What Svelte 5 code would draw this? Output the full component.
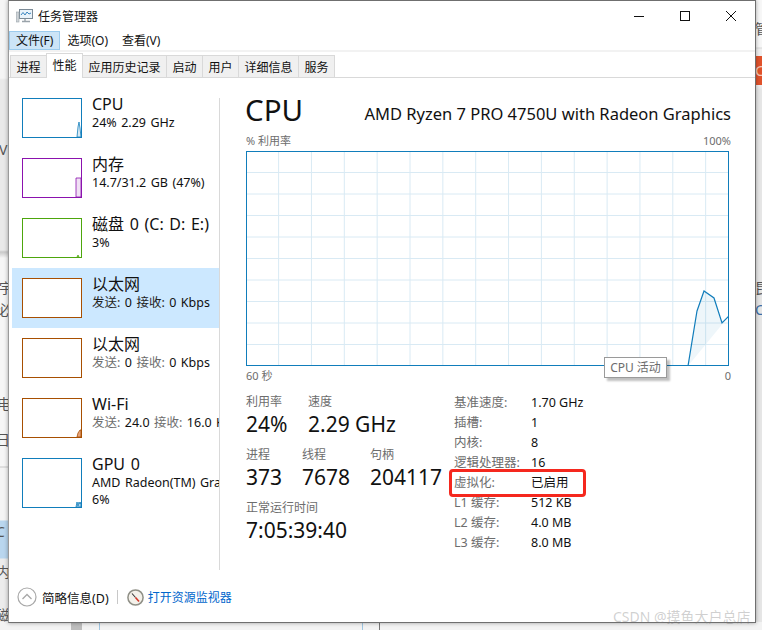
<script>
	const devices = [
		{ title: 'CPU', lines: [{ text: '24% 2.29 GHz' }], color: '#117dbb', fill: '#d9eaf4', points: '55,39 56,29 57,24 58,30 59,39' },
		{ title: '内存', lines: [{ text: '14.7/31.2 GB (47%)' }], color: '#8b12ae', fill: '#f0e0f4', points: '54,39 54,20 59,20 59,39' },
		{ title: '磁盘 0 (C: D: E:)', lines: [{ text: '3%' }], color: '#4da60c', fill: '#cfe8bc', points: '55,39 56,37 57,39' },
		{ title: '以太网', lines: [{ send: '0', recv: '0 Kbps' }], color: '#a74f01', selected: true },
		{ title: '以太网', lines: [{ send: '0', recv: '0 Kbps' }], color: '#a74f01' },
		{ title: 'Wi-Fi', lines: [{ send: '24.0', recv: '16.0 Kbps' }], color: '#a74f01', fill: '#e8a47c', points: '55,39 56,35 58,32 59,32 59,39' },
		{ title: 'GPU 0', lines: [{ text: 'AMD Radeon(TM) Graphics' }, { text: '6%' }], color: '#117dbb', fill: '#a8d0ea', points: '54,49 55,44 56,48 57,44 58,46 59,44 59,49', tall: true }
	];

	const facts = [
		['基准速度:', '1.70 GHz'],
		['插槽:', '1'],
		['内核:', '8'],
		['逻辑处理器:', '16'],
		['虚拟化:', '已启用'],
		['L1 缓存:', '512 KB'],
		['L2 缓存:', '4.0 MB'],
		['L3 缓存:', '8.0 MB']
	];

	const tabs = ['进程', '性能', '应用历史记录', '启动', '用户', '详细信息', '服务'];
	const menus = ['文件(F)', '选项(O)', '查看(V)'];

	const cols = Array.from({ length: 15 }, (_, i) => 164 + (i - 5) * 32.85);
	const rows = Array.from({ length: 9 }, (_, i) => (i + 1) * 21.5);
	const usage = '442,215 451,160 458,140 468,147 476,172 483,165';
</script>

<div class="desktop">
	<div class="backdrop">
		<div class="back-left"></div>
		<div class="back-right"></div>
		<div class="back-bottom"></div>
		<span class="frag" style="left:-1px;top:141px">V</span>
		<span class="frag" style="left:-1px;top:279px">宇</span>
		<span class="frag" style="left:-3px;top:301px">必</span>
		<span class="frag" style="left:-3px;top:395px">电</span>
		<span class="frag" style="left:-4px;top:431px">日</span>
		<span class="frag" style="left:-4px;top:523px">C</span>
		<span class="frag" style="left:-4px;top:563px">内</span>
		<span class="frag" style="left:-4px;top:606px">磁</span>
		<span class="frag" style="left:755px;top:20px">管</span>
		<span class="frag" style="left:755px;top:279px">昆</span>
		<span class="frag blue" style="left:755px;top:301px">C</span>
		<span class="orange">C</span>
	</div>

	<div class="window">
		<header class="titlebar">
			<svg class="app-icon" width="17" height="17" viewBox="0 0 17 17">
				<rect x="3.5" y="2.5" width="13" height="9" fill="#eaf3fa" stroke="#7b8a96" />
				<path d="M5 8 L7 5.5 L9 8 L11 5 L13 7 L15 6" fill="none" stroke="#3a86c0" />
				<rect x="0.5" y="5" width="2.5" height="10" fill="#cfd4d8" stroke="#9aa3aa" stroke-width="0.6" />
				<path d="M6 14.5 H14 M9 12 V14" stroke="#9aa3aa" stroke-width="1.4" />
			</svg>
			<span class="app-title">任务管理器</span>
			<div class="controls">
				<svg width="46" height="29" viewBox="0 0 46 29"><path d="M18 15.5 H28" stroke="#111" /></svg>
				<svg width="46" height="29" viewBox="0 0 46 29"><rect x="18.5" y="10.5" width="9" height="9" fill="none" stroke="#111" /></svg>
				<svg width="46" height="29" viewBox="0 0 46 29"><path d="M18 10 L28 20 M28 10 L18 20" stroke="#111" /></svg>
			</div>
		</header>

		<nav class="menubar">
			{#each menus as menu, i}
				<span class="menu" class:open={i === 0}>{menu}</span>
			{/each}
		</nav>

		<div class="tabs">
			{#each tabs as tab, i}
				<span class="tab" class:active={i === 1}>{tab}</span>
			{/each}
		</div>

		<div class="body">
			<aside class="sidebar">
				{#each devices as d}
					<div class="device" class:selected={d.selected} class:tall={d.tall}>
						<div class="thumb" style="border-color:{d.color}">
							{#if d.points}
								<svg viewBox="0 0 60 {d.tall ? 50 : 40}" width="60" height={d.tall ? 50 : 40} preserveAspectRatio="none">
									<polygon points={d.points} fill={d.fill} stroke={d.color} stroke-width="0.8" />
								</svg>
							{/if}
						</div>
						<div class="device-text">
							<div class="device-title">{d.title}</div>
							{#each d.lines as line}
								{#if line.text}
									<div class="device-line">{line.text}</div>
								{:else}
									<div class="device-line">
										<span class="muted">发送:</span> {line.send} <span class="muted">接收:</span> {line.recv}
									</div>
								{/if}
							{/each}
						</div>
					</div>
				{/each}
			</aside>

			<main class="detail">
				<div class="heading">
					<h1>CPU</h1>
					<span class="model">AMD Ryzen 7 PRO 4750U with Radeon Graphics</span>
				</div>
				<div class="axis-top">
					<span>% 利用率</span>
					<span>100%</span>
				</div>
				<svg class="chart" width="483" height="215" viewBox="0 0 483 215">
					{#each cols as x}
						<line x1={x} x2={x} y1="0" y2="215" stroke="#d9eaf4" />
					{/each}
					{#each rows as y}
						<line x1="0" x2="483" y1={y} y2={y} stroke="#d9eaf4" />
					{/each}
					<polygon points={usage} fill="#117dbb" fill-opacity="0.07" />
					<polyline points={usage} fill="none" stroke="#117dbb" stroke-width="1.2" />
					<rect x="0.5" y="0.5" width="482" height="214" fill="none" stroke="#117dbb" />
				</svg>
				<div class="axis-bottom">
					<span>60 秒</span>
					<span>0</span>
				</div>
				<div class="tooltip">CPU 活动</div>

				<div class="stats">
					<div class="live">
						<div class="stat-row">
							<div class="stat w62"><span class="stat-label">利用率</span><b>24%</b></div>
							<div class="stat"><span class="stat-label">速度</span><b>2.29 GHz</b></div>
						</div>
						<div class="stat-row">
							<div class="stat w56"><span class="stat-label">进程</span><b>373</b></div>
							<div class="stat w68"><span class="stat-label">线程</span><b>7678</b></div>
							<div class="stat"><span class="stat-label">句柄</span><b>204117</b></div>
						</div>
						<div class="stat-row">
							<div class="stat"><span class="stat-label">正常运行时间</span><b>7:05:39:40</b></div>
						</div>
					</div>
					<dl class="facts">
						{#each facts as [name, value]}
							<dt>{name}</dt>
							<dd>{value}</dd>
						{/each}
					</dl>
				</div>
			</main>
		</div>

		<footer class="footer">
			<svg width="20" height="20" viewBox="0 0 20 20">
				<circle cx="10" cy="10" r="9" fill="none" stroke="#a8a8a8" stroke-width="1.2" />
				<path d="M5.5 12 L10 7.5 L14.5 12" fill="none" stroke="#a8a8a8" stroke-width="1.3" />
			</svg>
			<span class="fewer">简略信息(D)</span>
			<span class="sep"></span>
			<svg width="17" height="17" viewBox="0 0 17 17">
				<circle cx="8.5" cy="8.5" r="7.6" fill="#f4f1ea" stroke="#8f8f86" stroke-width="1.5" />
				<path d="M5 4.5 L8.5 8.5" stroke="#333" stroke-width="1.1" />
				<path d="M8.5 8.5 L12 12.5" stroke="#d2392b" stroke-width="1.6" />
			</svg>
			<span class="link">打开资源监视器</span>
		</footer>

		<div class="redbox"></div>
	</div>

	<div class="watermark">CSDN @摸鱼大户总店</div>
</div>

<style>
	:global(body) {
		margin: 0;
		background: #f2f2f2;
	}

	.desktop {
		position: relative;
		width: 762px;
		height: 630px;
		overflow: hidden;
		font-family: "Noto Sans", "Noto Sans CJK SC", sans-serif;
		font-size: 12px;
		color: #111;
	}

	.backdrop {
		position: absolute;
		inset: 0;
		overflow: hidden;
	}

	.back-left {
		position: absolute;
		left: 0;
		top: 0;
		width: 8px;
		height: 630px;
		background: linear-gradient(#f5f5f5 0, #f5f5f5 78px, #e9e9e9 80px, #e9e9e9 250px, #c9c9c9 252px, #f6f6f6 258px, #f6f6f6 466px, #c8c8c8 467px, #f4f4f4 468px, #f4f4f4 520px, #b9d6ee 521px, #b9d6ee 558px, #ececec 559px);
	}

	.back-right {
		position: absolute;
		right: 0;
		top: 0;
		width: 7px;
		height: 630px;
		background: linear-gradient(#f7f7f7 0, #f7f7f7 47px, #d8d8d8 48px, #f0f0f0 49px, #f0f0f0 85px, #e6e6e6 90px);
	}

	.back-bottom {
		position: absolute;
		left: 0;
		right: 0;
		bottom: 0;
		height: 8px;
		background: #f3f3f3;
		background-image: linear-gradient(90deg, transparent 71px, #bdbdbd 71px, #bdbdbd 82px, transparent 82px, transparent 99px, #9fc6e2 99px, #9fc6e2 100px, transparent 100px, transparent 362px, #9fc6e2 362px, #9fc6e2 363px, transparent 363px, transparent 379px, #777 379px, #777 380px, transparent 380px);
	}

	.frag {
		position: absolute;
		font-size: 14px;
		line-height: 18px;
		color: #555;
	}

	.frag.blue {
		color: #3c6fa8;
	}

	.orange {
		position: absolute;
		left: 755px;
		top: 56px;
		width: 7px;
		height: 29px;
		overflow: hidden;
		background: #e0522b;
		color: #f6c9b8;
		font-size: 15px;
		line-height: 29px;
	}

	.window {
		position: absolute;
		left: 8px;
		top: 0;
		width: 746px;
		height: 621px;
		display: flex;
		flex-direction: column;
		background: #fff;
		border: 1px solid #6f6f6f;
		border-left-color: #9a9a9a;
		box-shadow: 0 0 4px rgba(0, 0, 0, 0.35);
	}

	.titlebar {
		flex: 0 0 29px;
		display: flex;
		align-items: center;
		padding-left: 7px;
	}

	.app-title {
		margin-left: 5px;
		font-size: 12px;
	}

	.controls {
		margin-left: auto;
		display: flex;
		margin-right: 1px;
	}

	.menubar {
		flex: 0 0 19px;
		display: flex;
		border-bottom: 2px solid #f2f2f2;
		padding-top: 1px;
	}

	.menu {
		padding: 0 6px;
		line-height: 17px;
		border: 1px solid transparent;
		border-bottom: 0;
	}

	.menu.open {
		background: #cce4f7;
		border: 1px solid #9ccbed;
	}

	.tabs {
		flex: 0 0 26px;
		display: flex;
		align-items: flex-end;
		padding-left: 2px;
		border-bottom: 1px solid #d9d9d9;
		box-sizing: border-box;
	}

	.tab {
		height: 22px;
		line-height: 23px;
		padding: 0 5.5px;
		margin-left: -1px;
		background: #f0f0f0;
		border: 1px solid #d9d9d9;
		border-bottom: 0;
		box-sizing: border-box;
	}

	.tab.active {
		height: 25px;
		line-height: 24px;
		background: #fff;
		margin-bottom: -1px;
		position: relative;
	}

	.body {
		flex: 1;
		display: flex;
		min-height: 0;
	}

	.sidebar {
		flex: 0 0 208px;
		min-width: 0;
		margin-left: 3px;
		padding-top: 10px;
		box-sizing: border-box;
		height: 492px;
		position: relative;
	}

	.sidebar::after {
		content: '';
		position: absolute;
		right: 0;
		top: 20px;
		bottom: 0;
		width: 1px;
		background: #d9d9d9;
	}

	.device {
		height: 60px;
		display: flex;
		box-sizing: border-box;
		padding: 10px 0 0 10px;
		overflow: hidden;
	}

	.device.tall {
		height: 70px;
	}

	.device.selected {
		background: #cce8ff;
	}

	.thumb {
		flex: 0 0 60px;
		height: 40px;
		box-sizing: border-box;
		border: 1px solid;
		overflow: hidden;
		background: #fff;
	}

	.tall .thumb {
		height: 50px;
	}

	.thumb svg {
		display: block;
		margin: -1px;
	}

	.device-text {
		margin-left: 10px;
		margin-top: -3px;
		white-space: nowrap;
	}

	.device-title {
		font-size: 16px;
		line-height: 19px;
		word-spacing: 1.5px;
	}

	.device-line {
		font-size: 12.5px;
		line-height: 17px;
		word-spacing: 1.2px;
	}

	.muted {
		color: #6d6d6d;
	}

	.selected .muted {
		color: #222;
	}

	.detail {
		flex: 1;
		min-width: 0;
		position: relative;
		padding-left: 26px;
		padding-right: 24px;
	}

	.heading {
		display: flex;
		justify-content: space-between;
		align-items: flex-end;
		height: 55px;
	}

	h1 {
		margin: 0 0 1px -1px;
		font-size: 29.5px;
		font-weight: 400;
		line-height: 44px;
	}

	.model {
		font-size: 16.5px;
		line-height: 24px;
		margin-bottom: 7px;
		white-space: nowrap;
	}

	.axis-top,
	.axis-bottom {
		display: flex;
		justify-content: space-between;
		color: #6d6d6d;
		font-size: 11px;
		line-height: 16px;
	}

	.axis-top {
		height: 18px;
	}

	.axis-bottom {
		margin-top: 2px;
	}

	.chart {
		display: block;
	}

	.tooltip {
		position: absolute;
		left: 384px;
		top: 279px;
		width: 63px;
		height: 21px;
		box-sizing: border-box;
		border: 1px solid #9a9a9a;
		background: #fff;
		box-shadow: 3px 3px 2px rgba(0, 0, 0, 0.25);
		color: #6d6d6d;
		font-size: 12px;
		line-height: 19px;
		text-align: center;
	}

	.stats {
		display: flex;
		margin-top: 9px;
	}

	.live {
		flex: 0 0 208px;
	}

	.stat-row {
		display: flex;
		margin-bottom: 8px;
	}

	.stat {
		display: flex;
		flex-direction: column;
	}

	.w62 {
		width: 62px;
	}

	.w56 {
		width: 56px;
	}

	.w68 {
		width: 68px;
	}

	.stat-label {
		color: #6d6d6d;
		font-size: 12px;
		line-height: 18px;
	}

	b {
		font-weight: 400;
		font-size: 21px;
		line-height: 27px;
		white-space: nowrap;
	}

	.facts {
		margin: 0;
		display: grid;
		grid-template-columns: 77px 1fr;
		grid-auto-rows: 20px;
		font-size: 12.5px;
		line-height: 20px;
	}

	dt {
		color: #6d6d6d;
	}

	dd {
		margin: 0;
	}

	.footer {
		flex: 0 0 50px;
		display: flex;
		align-items: center;
		padding-left: 8px;
		box-sizing: border-box;
	}

	.fewer {
		margin-left: 5px;
		font-size: 12.5px;
	}

	.sep {
		width: 1px;
		height: 14px;
		background: #c8c8c8;
		margin: 0 9px 0 8px;
	}

	.link {
		margin-left: 4px;
		color: #0066cc;
		font-size: 12px;
	}

	.redbox {
		position: absolute;
		left: 440px;
		top: 468px;
		width: 131px;
		height: 22px;
		border: 3px solid #f5281e;
		border-radius: 4px;
	}

	.watermark {
		position: absolute;
		left: 613px;
		top: 608px;
		font-size: 14px;
		line-height: 18px;
		color: rgba(120, 120, 120, 0.35);
		white-space: nowrap;
	}
</style>
